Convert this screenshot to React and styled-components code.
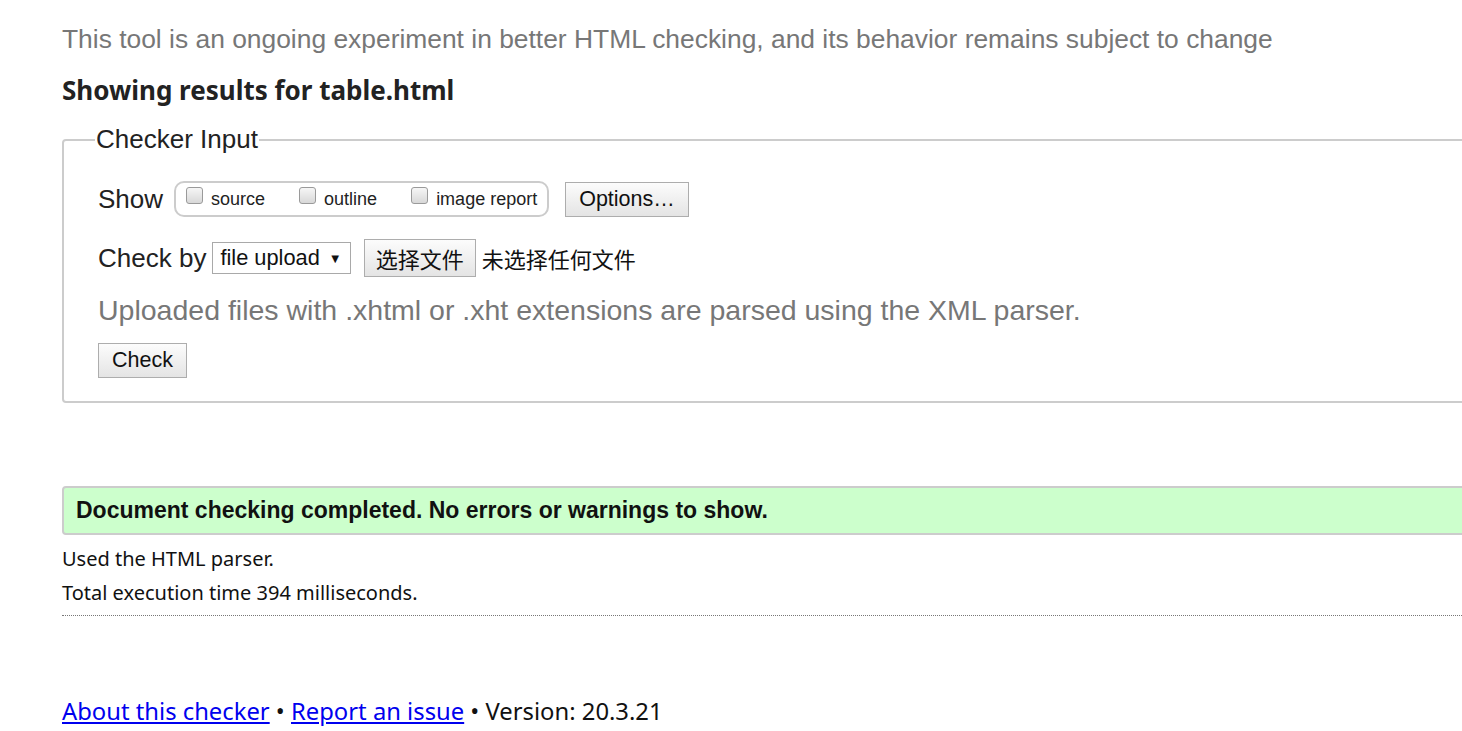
import React from "react";
import styled, { createGlobalStyle } from "styled-components";

const GlobalStyle = createGlobalStyle`
  html, body {
    margin: 0;
    padding: 0;
    background: #fff;
    overflow: hidden;
  }
  body {
    font-family: "Liberation Sans", Arial, sans-serif;
    color: #111;
  }
`;

const Page = styled.div`
  width: 1440px;
  padding: 22px 0 0 62px;
`;

const Intro = styled.p`
  margin: 0;
  font-size: 26.4px;
  line-height: 34px;
  color: #777;
`;

const Heading = styled.h2`
  margin: 17px 0 0;
  font-family: "Noto Sans", "Open Sans", sans-serif;
  font-size: 26px;
  line-height: 34px;
  font-weight: 700;
  color: #222;
`;

const Fieldset = styled.fieldset`
  margin: 17px 0 0;
  padding: 26px 34px 23px 34px;
  border: 2px solid #ccc;
  border-radius: 4px;
`;

const Legend = styled.legend`
  padding: 0 1px;
  margin-left: -3px;
  font-size: 26px;
  color: #222;
`;

const Row = styled.div`
  display: flex;
  align-items: center;
  gap: ${(p) => p.gap || 0}px;
  margin-top: ${(p) => p.top || 0}px;
`;

const Label = styled.span`
  font-size: ${(p) => p.size || 26}px;
  color: #222;
  margin-right: ${(p) => p.mr || 0}px;
`;

const CheckGroup = styled.div`
  display: flex;
  align-items: center;
  height: 32px;
  padding: 0 10px 0 10px;
  border: 2px solid #ccc;
  border-radius: 10px;
  gap: 34px;
`;

const CheckItem = styled.label`
  display: flex;
  align-items: center;
  gap: 8px;
  font-size: 18px;
  color: #222;
`;

const Box = styled.span`
  width: 15px;
  height: 15px;
  margin-top: -8px;
  border: 1px solid #9a9a9a;
  border-radius: 3px;
  background: linear-gradient(#f6f6f6, #d8d8d8);
`;

const Button = styled.button`
  font-family: "Liberation Sans", Arial, sans-serif;
  font-size: ${(p) => p.size || 21.5}px;
  color: #111;
  height: ${(p) => p.h || 35}px;
  padding: 0 ${(p) => p.px || 13}px;
  margin-left: ${(p) => p.ml || 0}px;
  border: 1px solid #adadad;
  border-radius: 0;
  background: linear-gradient(#fcfcfc, #e4e4e4);
`;

const Select = styled.div`
  display: flex;
  align-items: center;
  gap: 9px;
  height: 30px;
  padding: 0 8px 0 7px;
  border: 1px solid #a9a9a9;
  font-size: 21.8px;
  color: #111;
  background: #fff;
`;

const Arrow = styled.span`
  font-size: 13px;
`;

const CjkText = styled.span`
  font-family: "Noto Sans CJK SC", sans-serif;
  font-size: 22px;
  color: #111;
`;

const Note = styled.p`
  margin: 16px 0 0;
  font-size: 28.5px;
  line-height: 34px;
  color: #777;
`;

const Success = styled.div`
  margin-top: 83px;
  padding: 10px 12px;
  background: #cfc;
  border: 2px solid #ccc;
  border-radius: 4px;
  font-size: 23px;
  line-height: 25px;
  font-weight: 700;
  color: #111;
`;

const Info = styled.p`
  margin: ${(p) => p.top || 0}px 0 0;
  font-family: "Noto Sans", "Open Sans", sans-serif;
  font-size: 20px;
  line-height: 34px;
  color: #111;
`;

const Rule = styled.hr`
  margin: 5px 0 0;
  border: 0;
  border-top: 1px dotted #777;
`;

const Footer = styled.p`
  margin: 79px 0 0;
  font-family: "Noto Sans", "Open Sans", sans-serif;
  font-size: 23.8px;
  color: #111;
`;

const FootLink = styled.a`
  color: #00e;
  text-decoration: underline;
`;

const checks = ["source", "outline", "image report"];

export default function App() {
  return (
    <>
      <GlobalStyle />
      <Page>
        <Intro>
          This tool is an ongoing experiment in better HTML checking, and its behavior remains subject to change
        </Intro>
        <Heading>Showing results for table.html</Heading>
        <Fieldset>
          <Legend>Checker Input</Legend>
          <Row gap={16}>
            <Label mr={-5}>Show</Label>
            <CheckGroup>
              {checks.map((c) => (
                <CheckItem key={c}>
                  <Box />
                  {c}
                </CheckItem>
              ))}
            </CheckGroup>
            <Button>Options…</Button>
          </Row>
          <Row gap={6} top={22}>
            <Label>Check by</Label>
            <Select>
              file upload <Arrow>▼</Arrow>
            </Select>
            <Button h={38} ml={7} px={11}>
              <CjkText>选择文件</CjkText>
            </Button>
            <CjkText>未选择任何文件</CjkText>
          </Row>
          <Note>Uploaded files with .xhtml or .xht extensions are parsed using the XML parser.</Note>
          <Row top={16}>
            <Button>Check</Button>
          </Row>
        </Fieldset>
        <Success>Document checking completed. No errors or warnings to show.</Success>
        <Info top={7}>Used the HTML parser.</Info>
        <Info>Total execution time 394 milliseconds.</Info>
        <Rule />
        <Footer>
          <FootLink href="#">About this checker</FootLink> • <FootLink href="#">Report an issue</FootLink> • Version: 20.3.21
        </Footer>
      </Page>
    </>
  );
}
